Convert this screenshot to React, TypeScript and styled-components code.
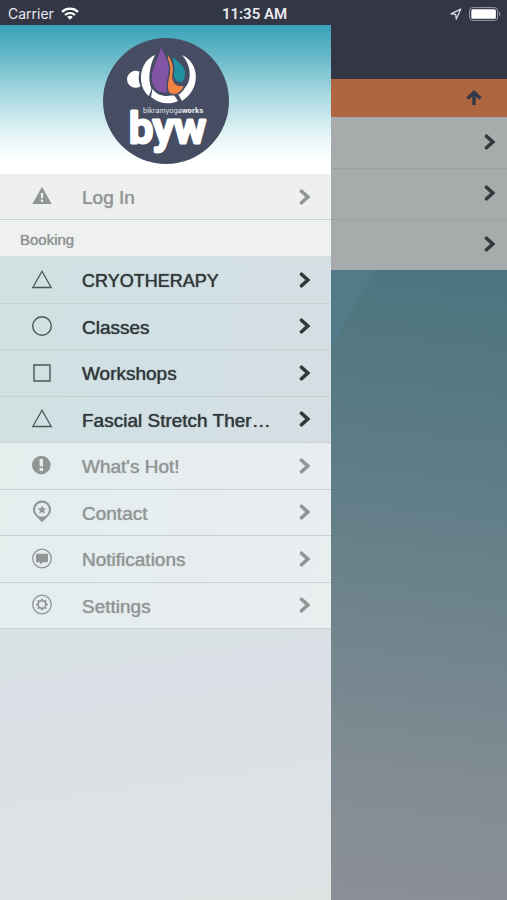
import React from "react";
import styled, { createGlobalStyle } from "styled-components";

const GlobalStyle = createGlobalStyle`
  * { box-sizing: border-box; }
  body { margin: 0; font-family: "Liberation Sans", Arial, sans-serif; }
  button { font: inherit; border: 0; background: none; padding: 0; cursor: pointer; }
`;

const Screen = styled.div`
  min-height: 100vh;
  display: flex;
  flex-direction: column;
  background: #333645;
`;

const StatusBar = styled.header`
  height: 25px;
  padding: 2px 6px 0 8px;
  display: grid;
  grid-template-columns: 1fr auto 1fr;
  align-items: center;
  color: #e9eaee;
  font-family: Inter, "Liberation Sans", sans-serif;
  font-size: 14px;
`;

const StatusGroup = styled.div<{ $end?: boolean }>`
  display: flex;
  align-items: center;
  gap: 7px;
  justify-content: ${(p) => (p.$end ? "flex-end" : "flex-start")};
`;

const Clock = styled.time`
  font-family: Roboto, sans-serif;
  font-size: 15px;
  font-weight: 600;
`;

const Body = styled.div`
  flex: 1;
  display: grid;
  grid-template-columns: minmax(0, 1fr) 176px;
`;

const Drawer = styled.nav`
  display: flex;
  flex-direction: column;
  background: linear-gradient(172deg, #cfe2e3 25%, #d8e3e5 62%, #dbe0e6 75%, #dfe3e4 100%);
`;

const Brand = styled.div`
  height: 149px;
  padding-top: 13px;
  display: flex;
  justify-content: center;
  align-items: flex-start;
  background: linear-gradient(#39a1b7 0%, #65b8c8 20%, #abdae2 48%, #e9f6f8 76%, #ffffff 92%);
`;

type Tone = "plain" | "booking" | "light";

const rowFill: Record<Tone, string> = {
  plain: "#eeefef",
  booking: "linear-gradient(100deg, #cfe1e1, #d2e0e5 50%, #d5dfe3)",
  light: "linear-gradient(100deg, #e3eeed, #e7edef 60%, #e9eeef)",
};

const RowList = styled.ul<{ $tone: Tone; $height: number }>`
  list-style: none;
  margin: 0;
  padding: 0;
  min-height: ${(p) => p.$height}px;
  display: grid;
  grid-auto-rows: 1fr;
  background: ${(p) => rowFill[p.$tone]};
`;

const RowItem = styled.li`
  display: flex;
  border-bottom: 1px solid #c8d1d4;
`;

const RowButton = styled.button<{ $strong: boolean }>`
  flex: 1;
  min-width: 0;
  display: grid;
  grid-template-columns: 20px minmax(0, 1fr) 12px;
  column-gap: 30px;
  align-items: center;
  padding: 0 20px 0 32px;
  text-align: left;
  color: ${(p) => (p.$strong ? "#32373b" : "#929596")};

  svg { display: block; }
`;

const RowLabel = styled.span<{ $caps: boolean }>`
  padding-top: 3px;
  font-size: ${(p) => (p.$caps ? 18 : 19)}px;
  line-height: 22px;
  white-space: nowrap;
  text-shadow: 0 0 1px currentColor;
`;

const SectionTitle = styled.h2`
  margin: 0;
  height: 37px;
  padding: 2px 20px 0;
  display: flex;
  align-items: center;
  background: #eff1f1;
  border-bottom: 1px solid #d3dada;
  color: #8f9293;
  font-size: 15px;
  font-weight: 400;
  text-shadow: 0 0 1px currentColor;
`;

const Page = styled.main`
  display: flex;
  flex-direction: column;
`;

const NavBar = styled.div`
  height: 54px;
  background: #333645;
`;

const DayBar = styled.div`
  height: 38px;
  padding-right: 25px;
  display: flex;
  align-items: center;
  justify-content: flex-end;
  background: #ad663f;

  svg { display: block; }
`;

const PageRow = styled.button`
  height: 51px;
  padding: 0 11px 2px 0;
  display: flex;
  align-items: center;
  justify-content: flex-end;
  background: #a7abab;
  color: #34383b;

  & + & { border-top: 1px solid #9da1a1; }
`;

const Backdrop = styled.div`
  flex: 1;
  background:
    linear-gradient(120deg, #527b8a 38px, transparent 39px) 0 0 / 42px 73px no-repeat,
    linear-gradient(187deg, #4b7481 0%, #54787f 15%, #627e88 38%, #74868e 62%, #838c94 82%, #8b8f97 100%);
`;

const Chevron = () => (
  <svg width="12" height="18" viewBox="0 0 12 18" fill="none" aria-hidden="true">
    <path d="M2.5 3.2 8.800 9l-6.300 5.8" stroke="currentColor" strokeWidth="3.6" strokeLinecap="round" />
  </svg>
);

const Wifi = () => (
  <svg width="18" height="13" viewBox="0 0 18 13" fill="none" stroke="#fff" strokeWidth="2.3" aria-hidden="true">
    <path d="M1 4.8c4.6-4.2 11.4-4.2 16 0M4 8c2.9-2.6 7.1-2.6 10 0" />
    <path d="M9 12.8 6.2 9.9c1.6-1.4 4-1.4 5.6 0z" fill="#fff" stroke="none" />
  </svg>
);

const LocationArrow = () => (
  <svg width="12" height="12" viewBox="0 0 12 12" fill="none" aria-hidden="true">
    <path d="M10.8 1.1 1 5.8l4.7.6.6 4.7z" stroke="#d9dbe0" strokeWidth="1.3" strokeLinejoin="round" />
  </svg>
);

const Battery = () => (
  <svg width="32" height="14" viewBox="0 0 32 14" aria-hidden="true">
    <rect x=".6" y=".6" width="28" height="12.8" rx="3" fill="none" stroke="#9b9da5" />
    <rect x="2.3" y="2.3" width="24.6" height="9.4" rx="1.5" fill="#fff" />
    <path d="M30 4.8c1.8.7 1.8 3.7 0 4.4z" fill="#9b9da5" />
  </svg>
);

type IconName = "warning" | "triangle" | "circle" | "square" | "alert" | "pin" | "message" | "gear";

const shapes: Record<IconName, React.ReactNode> = {
  warning: (
    <>
      <path d="M10-.2 19.7 17H.3z" fill="currentColor" />
      <path d="M8.7 6h2.6l-.5 5.6H9.2zM8.9 12.8h2.2V15H8.9z" fill="#eeefef" />
    </>
  ),
  triangle: <path d="M10 1.200 19.200 17.500H.8z" stroke="#4d565a" strokeWidth="1.3" />,
  circle: <circle cx="10" cy="10" r="9.3" stroke="#4d565a" strokeWidth="1.4" />,
  square: <path d="M2 2h16v16H2z" stroke="#4d565a" strokeWidth="1.4" />,
  alert: (
    <>
      <circle cx="9.3" cy="9" r="9.3" fill="currentColor" />
      <path d="M7.600 3h3.400v7.600H7.600zM7.600 12h3.400v3H7.600z" fill="#e7edee" />
    </>
  ),
  pin: (
    <>
      <path d="M10-1.500a9 9 0 0 0-6.6 15L10 20.200l6.600-6.700a9 9 0 0 0-6.600-15zm0 2.200a7 7 0 1 1 0 14 7 7 0 0 1 0-14z" fill="currentColor" fillRule="evenodd" />
      <path d="m10 3.200 1.300 3 3.200.3-2.4 2.1.7 3.2-2.8-1.7-2.8 1.7.7-3.2-2.400-2.100 3.200-.3z" fill="currentColor" />
    </>
  ),
  message: (
    <>
      <circle cx="10" cy="9.500" r="9.3" stroke="currentColor" strokeWidth="1.3" />
      <path d="M5 4.700h10q1 0 1 1v6.600q0 1-1 1h-4.200L8 15.500v-2.200H5q-1 0-1-1V5.700q0-1 1-1z" fill="currentColor" />
    </>
  ),
  gear: (
    <g stroke="currentColor">
      <circle cx="10" cy="9.500" r="9.3" strokeWidth="1.3" />
      <circle cx="10" cy="9.500" r="3.800" strokeWidth="1.500" />
      <path d="M10 3.700v2M10 13.300v2M4.200 9.500h2M13.800 9.500h2M5.900 5.400l1.400 1.400M12.700 12.200l1.400 1.400M5.900 13.600l1.400-1.400M12.700 6.800l1.400-1.400" strokeWidth="2" />
    </g>
  ),
};

const RowIcon = ({ name }: { name: IconName }) => (
  <svg width="20" height="20" viewBox="0 0 20 20" fill="none" overflow="visible" aria-hidden="true">
    {shapes[name]}
  </svg>
);

const Logo = () => (
  <svg width="126" height="126" viewBox="0 0 126 126" role="img" aria-label="bikramyogaworks">
    <circle cx="63" cy="63" r="63" fill="#464d63" />
    <path d="M36.500 33.800a8.500 8.500 0 1 0 1 14.400c-2-4-2.300-9-1-14.400z" fill="#fff" />
    <g fill="#fff">
      <path d="M52 17C35 24 34 49 46 58l2.500-7c-4-10-2-23 3.500-34z" />
      <path d="M49.500 51c4 5 8 7 15 7l6.500-1 4 6c-8 4-19 3-27-4z" />
      <path d="M79 17c18 8 19 34 0 46l-4.500-8c15-6 16-25 4.500-38z" />
    </g>
    <g stroke="#464d63" strokeLinejoin="round">
      <path d="M69.700 17c4 7 14 9 13 20 0 6-3 8-6 8-6-1-7-6-7-12 0-6-1-9 0-16z" fill="#2190a0" strokeWidth="1.500" />
      <path d="M64.500 15c-1 8 0 15-1 23-1 8-4 12 1 16 5 5 15 3 17-7-10 2-13-5-11-13 1-8-2-13-6-19z" fill="#f18345" strokeWidth="1.500" />
      <path d="M57.500 5c2 9 9 15 9 26 0 11-5 14-1 24-10 2-17.500-5-17.500-15 0-14 9.500-21 9.500-35z" fill="#8354a5" strokeWidth="1.500" />
    </g>
    <text x="40" y="75" fill="#e4e5ea" fontFamily="Inter, sans-serif" fontSize="7">
      bikramyoga<tspan fontWeight="800">works</tspan>
    </text>
    <text x="26" y="105" fill="#fff" stroke="#fff" strokeWidth="3" strokeLinejoin="round" fontFamily="Roboto, sans-serif" fontWeight="500" fontSize="43">
      byw
    </text>
  </svg>
);

interface Entry {
  label: string;
  icon: IconName;
}

const account: Entry[] = [{ label: "Log In", icon: "warning" }];

const booking: Entry[] = [
  { label: "CRYOTHERAPY", icon: "triangle" },
  { label: "Classes", icon: "circle" },
  { label: "Workshops", icon: "square" },
  { label: "Fascial Stretch Ther…", icon: "triangle" },
];

const general: Entry[] = [
  { label: "What's Hot!", icon: "alert" },
  { label: "Contact", icon: "pin" },
  { label: "Notifications", icon: "message" },
  { label: "Settings", icon: "gear" },
];

const Menu = ({ entries, tone, height }: { entries: Entry[]; tone: Tone; height: number }) => (
  <RowList $tone={tone} $height={height}>
    {entries.map((entry) => (
      <RowItem key={entry.label}>
        <RowButton type="button" $strong={tone === "booking"}>
          <RowIcon name={entry.icon} />
          <RowLabel $caps={entry.label === entry.label.toUpperCase()}>{entry.label}</RowLabel>
          <Chevron />
        </RowButton>
      </RowItem>
    ))}
  </RowList>
);

export default function App() {
  return (
    <Screen>
      <GlobalStyle />
      <StatusBar>
        <StatusGroup>
          <span>Carrier</span>
          <Wifi />
        </StatusGroup>
        <Clock>11:35 AM</Clock>
        <StatusGroup $end>
          <LocationArrow />
          <Battery />
        </StatusGroup>
      </StatusBar>
      <Body>
        <Drawer aria-label="Main menu">
          <Brand>
            <Logo />
          </Brand>
          <Menu entries={account} tone="plain" height={46} />
          <SectionTitle>Booking</SectionTitle>
          <Menu entries={booking} tone="booking" height={186} />
          <Menu entries={general} tone="light" height={186} />
        </Drawer>
        <Page>
          <NavBar />
          <DayBar>
            <button type="button" aria-label="Scroll up">
              <svg width="16" height="16" viewBox="0 0 16 16" fill="none" stroke="#33394a" strokeWidth="3.500">
                <path d="M8 15V3M1.500 8.500 8 2.500l6.500 6" />
              </svg>
            </button>
          </DayBar>
          <PageRow type="button" aria-label="Open first session"><Chevron /></PageRow>
          <PageRow type="button" aria-label="Open second session"><Chevron /></PageRow>
          <PageRow type="button" aria-label="Open third session"><Chevron /></PageRow>
          <Backdrop />
        </Page>
      </Body>
    </Screen>
  );
}
